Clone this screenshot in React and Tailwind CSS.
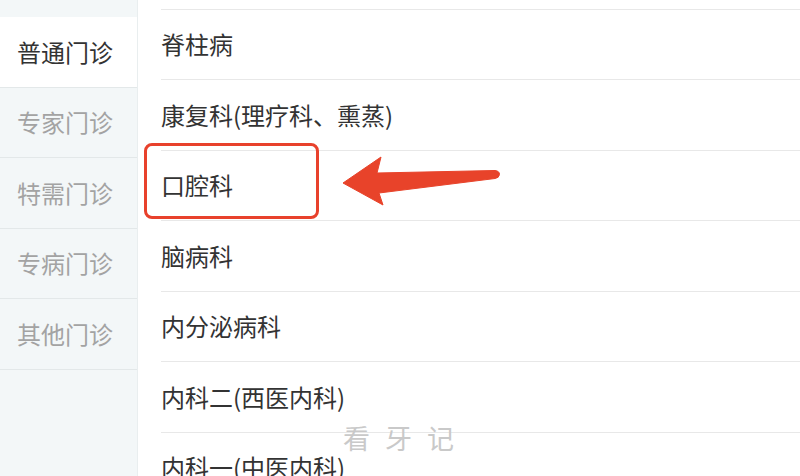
import React from 'react';

const tabs = ['普通门诊', '专家门诊', '特需门诊', '专病门诊', '其他门诊'];
const departments = [
  '脊柱病',
  '康复科(理疗科、熏蒸)',
  '口腔科',
  '脑病科',
  '内分泌病科',
  '内科二(西医内科)',
  '内科一(中医内科)',
];

const Arrow = () => (
  <svg className="absolute left-0 top-0" width="800" height="476" viewBox="0 0 800 476">
    <path
      d="M343 183 L381 157 L377 173 L495 170.5 Q499.5 171 499.5 174.5 Q499 178 495 178.5 L379 193 L383 205 Z"
      fill="#e8432a"
      stroke="#e8432a"
      strokeWidth="1"
      strokeLinejoin="round"
    />
  </svg>
);

export default function App() {
  return (
    <div
      className="relative w-[800px] h-[476px] overflow-hidden bg-white flex"
      style={{ fontFamily: '"Noto Sans CJK SC", "Noto Sans", sans-serif' }}
    >
      {/* Sidebar */}
      <div className="w-[138px] shrink-0 bg-[#f3f7f8] border-r border-[#e9eeef] flex flex-col pt-[17px]">
        {tabs.map((t, i) => (
          <div
            key={t}
            className={`h-[70.5px] flex items-center pl-[17px] text-[24px] border-b border-[#e3e8e9] ${
              i === 0 ? 'bg-white text-[#333333]' : 'text-[#a3a3a3]'
            }`}
          >
            {t}
          </div>
        ))}
      </div>

      {/* Department list */}
      <div className="flex-1 flex flex-col pl-[23px]">
        <div className="h-[9.5px] shrink-0 border-b border-[#e8e8e8]" />
        {departments.map((d, i) => (
          <div
            key={d}
            className="h-[70.5px] shrink-0 flex items-center text-[24px] text-[#333333] border-b border-[#e8e8e8]"
          >
            {d}
          </div>
        ))}
      </div>

      {/* Highlight box */}
      <div className="absolute left-[144px] top-[143px] w-[175px] h-[76px] rounded-[8px] border-[3px] border-[#e8412c]" />
      <Arrow />

      {/* Watermark */}
      <div className="absolute left-[343px] top-[420px] text-[27px] leading-[36px] tracking-[15px] text-[#c9c9c9]">
        看牙记
      </div>
    </div>
  );
}
